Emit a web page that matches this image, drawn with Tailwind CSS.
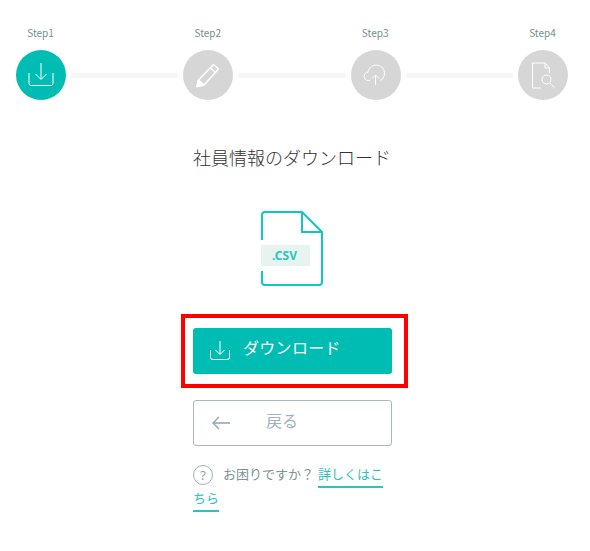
<!DOCTYPE html>
<html lang="ja"><head><meta charset="utf-8">
<script src="https://cdn.jsdelivr.net/npm/@tailwindcss/browser@4"></script>
</head>
<body class="bg-white font-['Noto_Sans_CJK_JP','Noto_Sans',sans-serif] overflow-hidden">
<div class="w-[590px] h-[551px] relative">
  <div class="flex items-end pl-[16px] pr-[22px] pt-[26px]">
    <div class="w-[50px] flex flex-col items-center shrink-0">
      <span class="text-[10px] leading-[14px] text-[#6f8f90] mb-[10px] -ml-[1px]">Step1</span>
      <div class="w-[50px] h-[50px] rounded-full bg-[#00bdb3] flex items-center justify-center">
        <svg width="26" height="26" viewBox="0 0 26 26" fill="none" stroke="#fff" stroke-width="1"><path d="M13 1v16M7.500 12l5.500 5.500 5.500-5.500"/><path d="M1 11v10.500a2 2 0 0 0 2 2h20a2 2 0 0 0 2-2V11"/></svg>
      </div>
    </div>
    <div class="flex-1 h-[5px] bg-[#f6f6f6] mx-[5px] mb-[22px]"></div>
    <div class="w-[50px] flex flex-col items-center shrink-0">
      <span class="text-[10px] leading-[14px] text-[#6f8f90] mb-[10px] -ml-[1px]">Step2</span>
      <div class="w-[50px] h-[50px] rounded-full bg-[#d6d6d6] flex items-center justify-center">
        <svg width="26" height="26" viewBox="0 0 26 26" fill="none" stroke="#fff" stroke-width="1.500" stroke-linejoin="round"><path d="M18.500 2.500l5 4.500L9 23 2 24.500l1.500-6.500z"/><path d="M15.500 6l5 4.500" /><path d="M2 24.500l1.500-6.500L9 23z" fill="#fff"/></svg>
      </div>
    </div>
    <div class="flex-1 h-[5px] bg-[#f6f6f6] mx-[5px] mb-[22px]"></div>
    <div class="w-[50px] flex flex-col items-center shrink-0">
      <span class="text-[10px] leading-[14px] text-[#6f8f90] mb-[10px] -ml-[1px]">Step3</span>
      <div class="w-[50px] h-[50px] rounded-full bg-[#d6d6d6] flex items-center justify-center">
        <svg width="26" height="22" viewBox="0 0 26 22" fill="none" stroke="#fff" stroke-width="1"><path d="M7 16.500H5.500a4.200 4.200 0 0 1-.5-8.400C6 3.500 9.500 1 13.500 1A8 8 0 0 1 21.500 9c0 3.500-1.500 6.500-4.500 7.500"/><path d="M12.500 21V11M9 14.500l3.500-3.500 3.500 3.500"/></svg>
      </div>
    </div>
    <div class="flex-1 h-[5px] bg-[#f6f6f6] mx-[5px] mb-[22px]"></div>
    <div class="w-[50px] flex flex-col items-center shrink-0">
      <span class="text-[10px] leading-[14px] text-[#6f8f90] mb-[10px] -ml-[1px]">Step4</span>
      <div class="w-[50px] h-[50px] rounded-full bg-[#d6d6d6] flex items-center justify-center">
        <svg width="24" height="27" viewBox="0 0 24 27" fill="none" stroke="#fff" stroke-width="1"><path d="M10 26H1.500V1H14l4.500 5v5"/><path d="M14 1v5h4.500"/><circle cx="15.500" cy="17.500" r="4.500"/><path d="M18.800 21l4.500 4.500"/></svg>
      </div>
    </div>
  </div>

  <h1 class="mt-[44px] pr-[6px] text-center text-[18px] leading-[26px] font-light text-[#333]">社員情報のダウンロード</h1>

  <div class="flex justify-center mt-[41px] pr-[6px]">
    <div class="relative w-[62px] h-[75px]">
      <svg width="62" height="75" viewBox="0 0 62 75" fill="none" stroke="#12c6c2" stroke-width="2"><path d="M1 29V4a3 3 0 0 1 3-3h37l20 20v50a3 3 0 0 1-3 3H4a3 3 0 0 1-3-3V60"/><path d="M41 1v20h20"/></svg>
      <div class="absolute left-0 top-[34px] w-[49px] h-[21px] bg-[#e6f4f0] flex items-center justify-center text-[12px] font-bold text-[#2cc4bc] font-['Noto_Sans',sans-serif] -tracking-[0px] pr-[2px]">.CSV</div>
    </div>
  </div>

  <div class="ml-[181px] mt-[28px] w-[227px] h-[74px] border-4 border-[#f00] px-[8px] pt-[10px]">
    <div class="w-[199px] h-[46px] bg-[#00bdb3] rounded-[3px] flex items-center pl-[17px] text-white">
      <svg width="20" height="19" viewBox="0 0 20 19" fill="none" stroke="#fff" stroke-width="1" class="shrink-0 -mt-[1px]"><path d="M10 0v13M5.500 9l4.500 4.500L14.500 9"/><path d="M.5 9v7.500a2 2 0 0 0 2 2h15a2 2 0 0 0 2-2V9"/></svg>
      <span class="ml-[13px] text-[16px] leading-[24px] font-normal tracking-[.3px] -mt-[9px]">ダウンロード</span>
    </div>
  </div>

  <div class="ml-[193px] mt-[12px] w-[199px] h-[46px] border border-[#a9b8bd] rounded-[3px] flex items-center pl-[18px]">
    <svg width="18" height="14" viewBox="0 0 18 14" fill="none" stroke="#8fa3a8" stroke-width="1.300" class="shrink-0"><path d="M18 7H1M7 1L1 7l6 6"/></svg>
    <span class="ml-[36px] text-[16px] leading-[24px] text-[#a3b3b8] -mt-[7px]">戻る</span>
  </div>

  <p class="ml-[193px] mt-[16px] w-[199px] text-[13px] leading-[24px] text-[#7f9296]">
    <span class="inline-flex items-center justify-center w-[20px] h-[20px] mt-[3px] rounded-full border border-[#9fb0b5] text-[13px] leading-none text-[#8fa3a8] align-top mr-[10px] font-['Noto_Sans',sans-serif]">?</span>お困りですか？<a class="ml-[4px] text-[#2cc4bc] border-b-2 border-[#2cc4bc] pb-[3px]">詳しくはこちら</a>
  </p>
</div>
</body></html>
